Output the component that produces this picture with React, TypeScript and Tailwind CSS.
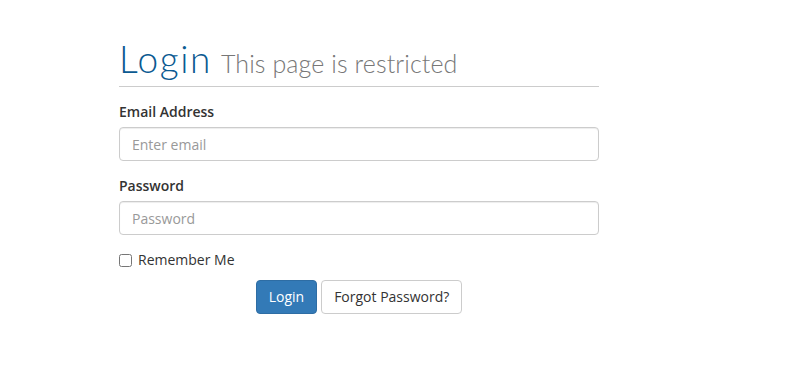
export default function App() {
  return (
    <div className="min-h-[371px] bg-white font-['Open_Sans',sans-serif] text-sm text-[#333]">
      <div className="ml-[119px] w-[480px] pt-[41px]">
        <h1 className="border-b border-[#cccccc] font-['Lato',sans-serif] font-light leading-[36px]">
          <span className="text-[37px] tracking-[1.6px] text-[#0b5a91]">Login</span>
          <span className="ml-[9px] text-[25px] tracking-[0.1px] text-[#777777]">This page is restricted</span>
        </h1>

        <form className="mt-[15px]">
          <div className="mb-[15px]">
            <label className="mb-[5px] block font-semibold leading-[20px]">Email Address</label>
            <input
              type="email"
              placeholder="Enter email"
              className="block h-[34px] w-full rounded border border-[#cccccc] px-3 text-sm text-[#555] placeholder:text-[#999] shadow-[inset_0_1px_1px_rgba(0,0,0,0.075)] outline-none"
            />
          </div>
          <div className="mb-[15px]">
            <label className="mb-[5px] block font-semibold leading-[20px]">Password</label>
            <input
              type="password"
              placeholder="Password"
              className="block h-[34px] w-full rounded border border-[#cccccc] px-3 text-sm text-[#555] placeholder:text-[#999] shadow-[inset_0_1px_1px_rgba(0,0,0,0.075)] outline-none"
            />
          </div>
          <label className="flex items-center gap-[6px] leading-[20px]">
            <input type="checkbox" className="m-0 h-[13px] w-[13px]" />
            <span>Remember Me</span>
          </label>
          <div className="mt-[10px] flex justify-center gap-[4px]">
            <button
              type="button"
              className="h-[34px] rounded border border-[#2e6da4] bg-[#337ab7] px-3 text-sm text-white"
            >
              Login
            </button>
            <button
              type="button"
              className="h-[34px] rounded border border-[#cccccc] bg-white px-3 text-sm text-[#333]"
            >
              Forgot Password?
            </button>
          </div>
        </form>
      </div>
    </div>
  )
}
